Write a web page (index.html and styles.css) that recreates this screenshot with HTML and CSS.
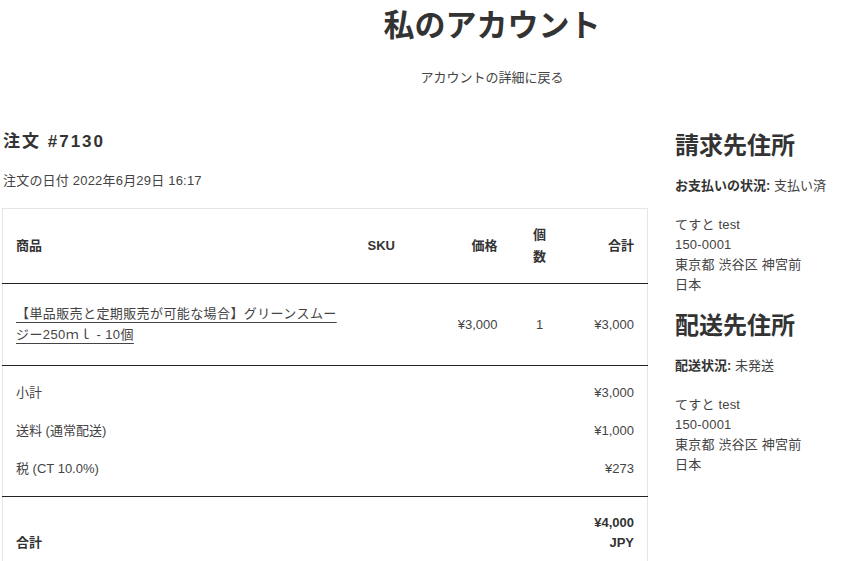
FILE: index.html
```html
<!DOCTYPE html>
<html lang="ja">
<head>
<meta charset="utf-8">
<link rel="stylesheet" href="styles.css">
</head>
<body>
<header class="page-head">
  <h1 class="page-title">私のアカウント</h1>
  <a class="back-link" href="#">アカウントの詳細に戻る</a>
</header>
<main class="layout">
  <section class="order">
    <h2 class="order-title">注文 #7130</h2>
    <p class="order-date">注文の日付 2022年6月29日 16:17</p>
    <table class="order-table">
      <colgroup>
        <col class="c-prod"><col class="c-sku"><col class="c-price"><col class="c-qty"><col class="c-total">
      </colgroup>
      <thead>
        <tr>
          <th class="left">商品</th>
          <th class="left">SKU</th>
          <th class="right">価格</th>
          <th class="center">個<br>数</th>
          <th class="right">合計</th>
        </tr>
      </thead>
      <tbody>
        <tr>
          <td class="left"><a class="prod-link" href="#">【単品販売と定期販売が可能な場合】グリーンスムージー250ｍｌ - 10個</a></td>
          <td></td>
          <td class="right">¥3,000</td>
          <td class="center">1</td>
          <td class="right">¥3,000</td>
        </tr>
      </tbody>
      <tbody class="summary">
        <tr><td colspan="4" class="left">小計</td><td class="right">¥3,000</td></tr>
        <tr><td colspan="4" class="left">送料 (通常配送)</td><td class="right">¥1,000</td></tr>
        <tr><td colspan="4" class="left">税 (CT 10.0%)</td><td class="right">¥273</td></tr>
      </tbody>
      <tfoot>
        <tr class="grand"><th colspan="4" class="left bottom">合計</th><th class="right">¥4,000<br>JPY</th></tr>
      </tfoot>
    </table>
  </section>
  <aside class="addresses">
    <h2 class="addr-title">請求先住所</h2>
    <p class="status"><strong>お支払いの状況:</strong> 支払い済</p>
    <p class="addr">てすと test<br>150-0001<br>東京都 渋谷区 神宮前<br>日本</p>
    <h2 class="addr-title second">配送先住所</h2>
    <p class="status"><strong>配送状況:</strong> 未発送</p>
    <p class="addr">てすと test<br>150-0001<br>東京都 渋谷区 神宮前<br>日本</p>
  </aside>
</main>
</body>
</html>
```

FILE: styles.css
```css
html, body {
  margin: 0;
  padding: 0;
  background: #fff;
  overflow: hidden;
}
body {
  font-family: "Liberation Sans", "Noto Sans CJK JP", sans-serif;
  color: #333;
  font-size: 13px;
  line-height: 20px;
}
.page-head {
  margin-left: 130px;
  text-align: center;
  padding-top: 6px;
}
.page-title {
  margin: 0;
  font-size: 31px;
  line-height: 40px;
  font-weight: 700;
  color: #333;
}
.back-link {
  display: block;
  margin-top: 22px;
  color: #444;
  text-decoration: none;
  font-size: 13px;
  line-height: 20px;
}
.layout {
  display: flex;
  gap: 28px;
  padding-left: 2px;
  margin-top: 42px;
}
.order {
  width: 645px;
  flex: none;
}
.order-title {
  margin: 0 0 0 1px;
  font-size: 17px;
  line-height: 24px;
  font-weight: 700;
  letter-spacing: 2px;
  color: #333;
}
.order-date {
  margin: 17px 0 17px 1px;
  color: #444;
  letter-spacing: 0.2px;
}
.order-table {
  width: 645px;
  border-collapse: collapse;
  border: 1px solid #e6e6e6;
  table-layout: fixed;
  color: #444;
}
.c-prod { width: 352px; }
.c-sku { width: 66px; }
.c-price { width: 90px; }
.c-qty { width: 58px; }
.c-total { width: 79px; }
.order-table th,
.order-table td {
  padding: 0 13px;
  vertical-align: middle;
}
.order-table th {
  font-weight: 700;
  color: #333;
}
.order-table .left { text-align: left; }
.order-table .right { text-align: right; }
.order-table .center { text-align: center; }
.order-table thead th {
  padding-top: 15px;
  padding-bottom: 15px;
  line-height: 22px;
  height: 44px;
}
.order-table tbody tr:first-child td {
  border-top: 1px solid #222;
}
.order-table tbody:first-of-type td {
  padding-top: 19px;
  padding-bottom: 20px;
  line-height: 21px;
}
.prod-link {
  color: #444;
  letter-spacing: 0.4px;
  text-decoration: underline;
  text-underline-offset: 4px;
  text-decoration-thickness: 1px;
}
.summary td {
  padding-top: 9px;
  padding-bottom: 9px;
}
.summary tr:first-child td { padding-top: 17px; }
.summary tr:last-child td { padding-bottom: 17px; }
.grand th {
  border-top: 1px solid #222;
  padding-top: 16px;
  padding-bottom: 16px;
}
.grand .bottom { vertical-align: bottom; }
.addresses {
  flex: none;
  width: 200px;
}
.addr-title {
  margin: 0;
  font-size: 24px;
  line-height: 32px;
  font-weight: 700;
  color: #333;
}
.addr-title.second { margin-top: 15px; }
.status {
  margin: 14px 0 0;
  color: #444;
}
.status strong { color: #333; }
.addr {
  margin: 19px 0 0;
  color: #444;
  letter-spacing: 0.2px;
}
```
